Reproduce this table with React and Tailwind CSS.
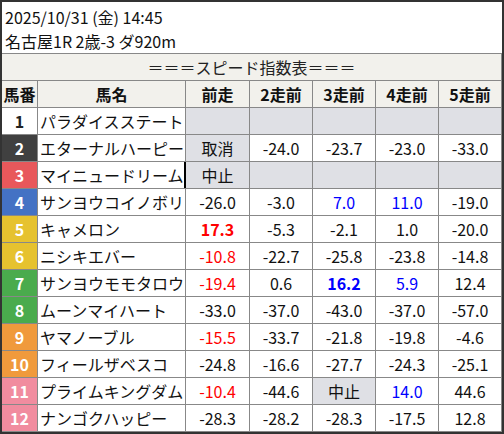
const rows = [
  { no: 1, name: "パラダイスステート", cls: "bg-white text-[#222]", vals: [null, null, null, null, null] },
  { no: 2, name: "エターナルハーピー", cls: "bg-[#404040] text-white", vals: [{ t: "取消", g: true }, "-24.0", "-23.7", "-23.0", "-33.0"] },
  { no: 3, name: "マイニュードリーム", cls: "bg-[#e8585b] text-white", mark: true, vals: [{ t: "中止", g: true }, null, null, null, null] },
  { no: 4, name: "サンヨウコイノボリ", cls: "bg-[#4472c4] text-white", vals: ["-26.0", "-3.0", { t: "7.0", c: "blue" }, { t: "11.0", c: "blue" }, "-19.0"] },
  { no: 5, name: "キャメロン", cls: "bg-[#e6c22f] text-white", vals: [{ t: "17.3", c: "red", b: true }, "-5.3", "-2.1", "1.0", "-20.0"] },
  { no: 6, name: "ニシキエバー", cls: "bg-[#e6c22f] text-white", vals: [{ t: "-10.8", c: "red" }, "-22.7", "-25.8", "-23.8", "-14.8"] },
  { no: 7, name: "サンヨウモモタロウ", cls: "bg-[#4aab4d] text-white", vals: [{ t: "-19.4", c: "red" }, "0.6", { t: "16.2", c: "blue", b: true }, { t: "5.9", c: "blue" }, "12.4"] },
  { no: 8, name: "ムーンマイハート", cls: "bg-[#4aab4d] text-white", vals: ["-33.0", "-37.0", "-43.0", "-37.0", "-57.0"] },
  { no: 9, name: "ヤマノーブル", cls: "bg-[#f09a3c] text-white", vals: [{ t: "-15.5", c: "red" }, "-33.7", "-21.8", "-19.8", "-4.6"] },
  { no: 10, name: "フィールザベスコ", cls: "bg-[#f09a3c] text-white", vals: ["-24.8", "-16.6", "-27.7", "-24.3", "-25.1"] },
  { no: 11, name: "プライムキングダム", cls: "bg-[#f18c9f] text-white", vals: [{ t: "-10.4", c: "red" }, "-44.6", { t: "中止", g: true }, { t: "14.0", c: "blue" }, "44.6"] },
  { no: 12, name: "ナンゴクハッピー", cls: "bg-[#f18c9f] text-white", vals: ["-28.3", "-28.2", "-28.3", "-17.5", "12.8"] },
]

const heads = ["前走", "2走前", "3走前", "4走前", "5走前"]

const Cell = ({ v, mark }) => {
  if (v === null) {
    return <div className={`bg-[#dfe0e5] ${mark ? "shadow-[-2px_0_0_#000]" : ""}`} />
  }
  const o = typeof v === "string" ? { t: v } : v
  let color = "text-[#111]"
  if (o.c === "red") color = "text-[#ff0000]"
  if (o.c === "blue") color = "text-[#0000ff]"
  return (
    <div
      className={`flex items-center justify-center ${o.g ? "bg-[#dfe0e5]" : "bg-white"} ${color} ${o.b ? "font-bold" : ""} ${mark ? "shadow-[-2px_0_0_#000]" : ""}`}
    >
      {o.t}
    </div>
  )
}

export default function App() {
  return (
    <div
      className="w-[504px] h-[434px] border-2 border-[#333] bg-white text-[16px] leading-[24px] text-[#111] overflow-hidden"
      style={{ fontFamily: '"Noto Sans CJK JP", "Noto Sans", sans-serif' }}
    >
      <div className="h-[51px] px-[3px] pt-[3px]">
        <div>2025/10/31 (金) 14:45</div>
        <div>名古屋1R 2歳-3 ダ920m</div>
      </div>
      <div className="bg-[#888] flex flex-col gap-px py-px pr-px">
        <div className="h-[26px] bg-[#f2f1ec] flex items-center justify-center text-[#222]">
          ＝＝＝スピード指数表＝＝＝
        </div>
        <div className="grid grid-cols-[35px_147px_63px_62px_62px_62px_62px] auto-rows-[26px] gap-px">
          <div className="bg-[#f2f1ec] flex items-center justify-center font-bold">馬番</div>
          <div className="bg-[#f2f1ec] flex items-center justify-center font-bold">馬名</div>
          {heads.map((h) => (
            <div key={h} className="bg-[#f2f1ec] flex items-center justify-center font-bold">
              {h}
            </div>
          ))}
          {rows.map((r) => (
            <div key={r.no} className="contents">
              <div className={`flex items-center justify-center font-bold ${r.cls}`}>{r.no}</div>
              <div className="bg-white flex items-center pl-[2px] whitespace-nowrap overflow-hidden">{r.name}</div>
              {r.vals.map((v, i) => (
                <Cell key={i} v={v} mark={r.mark && i === 0} />
              ))}
            </div>
          ))}
        </div>
      </div>
    </div>
  )
}
